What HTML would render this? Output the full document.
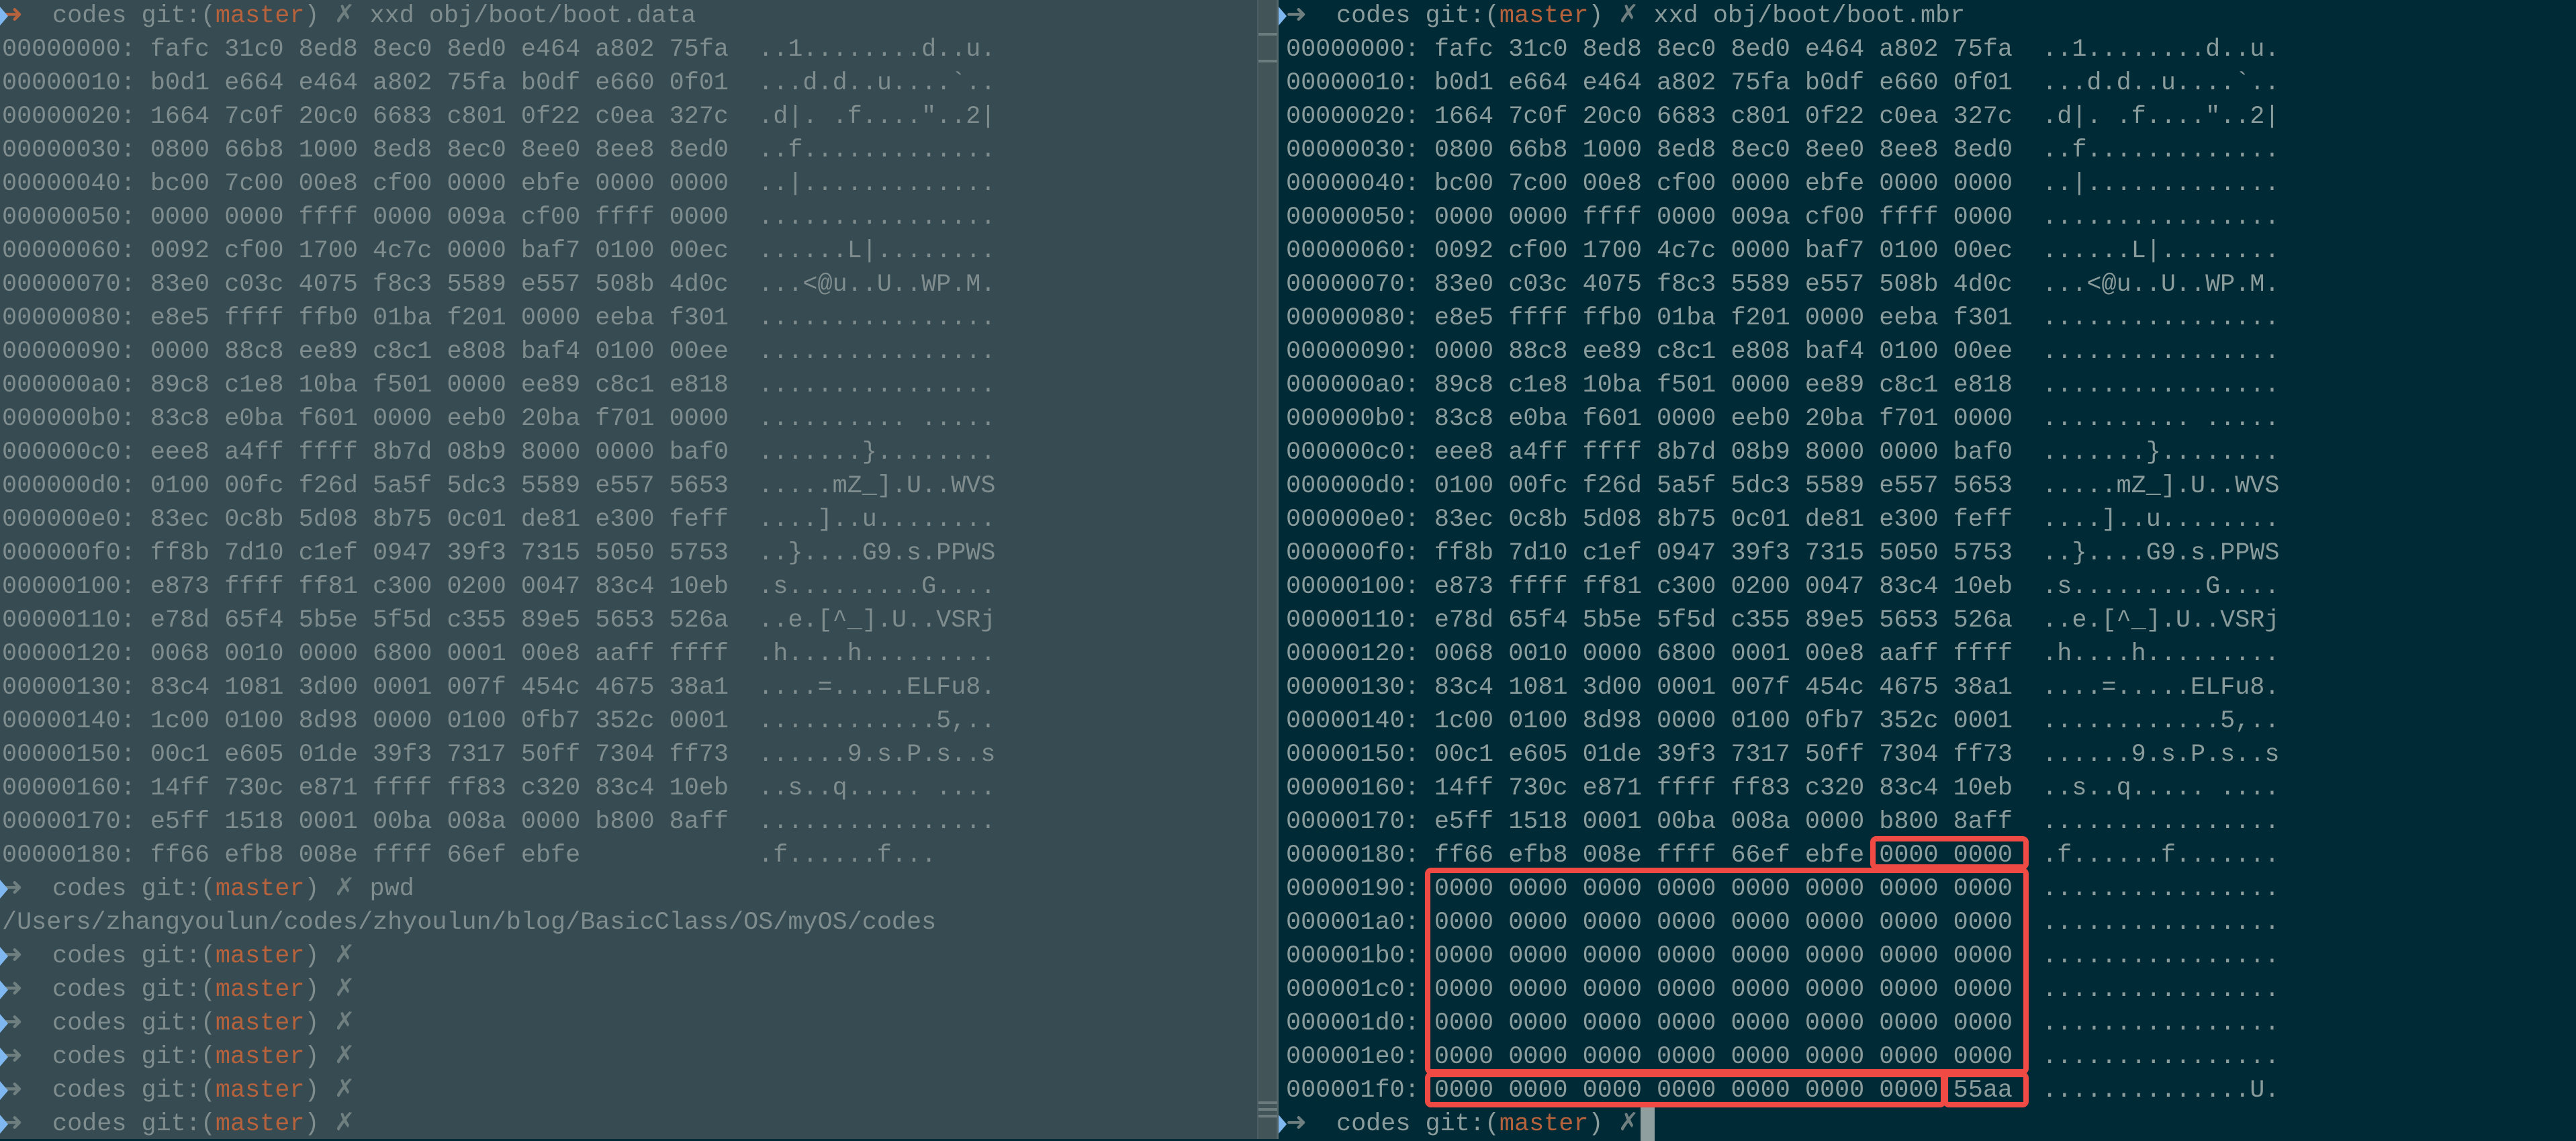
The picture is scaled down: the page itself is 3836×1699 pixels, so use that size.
<!DOCTYPE html>
<html><head><meta charset="utf-8"><style>
html,body{margin:0;padding:0;width:3836px;height:1696px;overflow:hidden;background:#002a36}
.l{position:absolute;left:0;top:0;width:1872px;height:1696px;background:#374b52}
.d{position:absolute;left:1872px;top:0;width:32px;height:1696px;background:#435459;border-left:2px solid #4c5e63;border-right:3px solid #56676b;box-sizing:border-box}
.d i{position:absolute;left:0;width:28px;height:4px;background:#6b7b7e}
.r{position:absolute;left:1904px;top:0;width:1932px;height:1696px;background:#002a36}
pre{position:absolute;margin:0;top:-1px;font-family:"Liberation Mono",monospace;font-size:36.8px;line-height:50px;white-space:pre}
.pl{left:3px;color:#7f8d8e}
.pr{left:1915px;color:#8b9c9c}
.m{color:#b5623d}
.a{color:#6f7f80}
.b{position:absolute;border:8px solid #f04a45;border-radius:9px;box-sizing:border-box}
.cur{position:absolute;left:2443px;top:1649px;width:21px;height:50px;background:#8f9fa0}
.mk{position:absolute;left:0;width:0;height:0;border-top:14px solid transparent;border-bottom:14px solid transparent;border-left:12px solid #7fb8f0}
</style></head><body>
<div class="l"></div>
<div class="d"><i style="top:49px"></i><i style="top:89px"></i><i style="top:1640px"></i><i style="top:1650px"></i><i style="top:1660px"></i></div>
<div class="r"></div>
<pre class="pl"><span class="m">➜</span>  codes git:(<span class="m">master</span>) <span class="a">✗</span> xxd obj/boot/boot.data
00000000: fafc 31c0 8ed8 8ec0 8ed0 e464 a802 75fa  ..1........d..u.
00000010: b0d1 e664 e464 a802 75fa b0df e660 0f01  ...d.d..u....`..
00000020: 1664 7c0f 20c0 6683 c801 0f22 c0ea 327c  .d|. .f...."..2|
00000030: 0800 66b8 1000 8ed8 8ec0 8ee0 8ee8 8ed0  ..f.............
00000040: bc00 7c00 00e8 cf00 0000 ebfe 0000 0000  ..|.............
00000050: 0000 0000 ffff 0000 009a cf00 ffff 0000  ................
00000060: 0092 cf00 1700 4c7c 0000 baf7 0100 00ec  ......L|........
00000070: 83e0 c03c 4075 f8c3 5589 e557 508b 4d0c  ...&lt;@u..U..WP.M.
00000080: e8e5 ffff ffb0 01ba f201 0000 eeba f301  ................
00000090: 0000 88c8 ee89 c8c1 e808 baf4 0100 00ee  ................
000000a0: 89c8 c1e8 10ba f501 0000 ee89 c8c1 e818  ................
000000b0: 83c8 e0ba f601 0000 eeb0 20ba f701 0000  .......... .....
000000c0: eee8 a4ff ffff 8b7d 08b9 8000 0000 baf0  .......}........
000000d0: 0100 00fc f26d 5a5f 5dc3 5589 e557 5653  .....mZ_].U..WVS
000000e0: 83ec 0c8b 5d08 8b75 0c01 de81 e300 feff  ....]..u........
000000f0: ff8b 7d10 c1ef 0947 39f3 7315 5050 5753  ..}....G9.s.PPWS
00000100: e873 ffff ff81 c300 0200 0047 83c4 10eb  .s.........G....
00000110: e78d 65f4 5b5e 5f5d c355 89e5 5653 526a  ..e.[^_].U..VSRj
00000120: 0068 0010 0000 6800 0001 00e8 aaff ffff  .h....h.........
00000130: 83c4 1081 3d00 0001 007f 454c 4675 38a1  ....=.....ELFu8.
00000140: 1c00 0100 8d98 0000 0100 0fb7 352c 0001  ............5,..
00000150: 00c1 e605 01de 39f3 7317 50ff 7304 ff73  ......9.s.P.s..s
00000160: 14ff 730c e871 ffff ff83 c320 83c4 10eb  ..s..q..... ....
00000170: e5ff 1518 0001 00ba 008a 0000 b800 8aff  ................
00000180: ff66 efb8 008e ffff 66ef ebfe            .f......f...
<span class="a">➜</span>  codes git:(<span class="m">master</span>) <span class="a">✗</span> pwd
/Users/zhangyoulun/codes/zhyoulun/blog/BasicClass/OS/myOS/codes
<span class="a">➜</span>  codes git:(<span class="m">master</span>) <span class="a">✗</span>
<span class="a">➜</span>  codes git:(<span class="m">master</span>) <span class="a">✗</span>
<span class="a">➜</span>  codes git:(<span class="m">master</span>) <span class="a">✗</span>
<span class="a">➜</span>  codes git:(<span class="m">master</span>) <span class="a">✗</span>
<span class="a">➜</span>  codes git:(<span class="m">master</span>) <span class="a">✗</span>
<span class="a">➜</span>  codes git:(<span class="m">master</span>) <span class="a">✗</span></pre>
<pre class="pr"><span class="a">➜</span>  codes git:(<span class="m">master</span>) <span class="a">✗</span> xxd obj/boot/boot.mbr
00000000: fafc 31c0 8ed8 8ec0 8ed0 e464 a802 75fa  ..1........d..u.
00000010: b0d1 e664 e464 a802 75fa b0df e660 0f01  ...d.d..u....`..
00000020: 1664 7c0f 20c0 6683 c801 0f22 c0ea 327c  .d|. .f...."..2|
00000030: 0800 66b8 1000 8ed8 8ec0 8ee0 8ee8 8ed0  ..f.............
00000040: bc00 7c00 00e8 cf00 0000 ebfe 0000 0000  ..|.............
00000050: 0000 0000 ffff 0000 009a cf00 ffff 0000  ................
00000060: 0092 cf00 1700 4c7c 0000 baf7 0100 00ec  ......L|........
00000070: 83e0 c03c 4075 f8c3 5589 e557 508b 4d0c  ...&lt;@u..U..WP.M.
00000080: e8e5 ffff ffb0 01ba f201 0000 eeba f301  ................
00000090: 0000 88c8 ee89 c8c1 e808 baf4 0100 00ee  ................
000000a0: 89c8 c1e8 10ba f501 0000 ee89 c8c1 e818  ................
000000b0: 83c8 e0ba f601 0000 eeb0 20ba f701 0000  .......... .....
000000c0: eee8 a4ff ffff 8b7d 08b9 8000 0000 baf0  .......}........
000000d0: 0100 00fc f26d 5a5f 5dc3 5589 e557 5653  .....mZ_].U..WVS
000000e0: 83ec 0c8b 5d08 8b75 0c01 de81 e300 feff  ....]..u........
000000f0: ff8b 7d10 c1ef 0947 39f3 7315 5050 5753  ..}....G9.s.PPWS
00000100: e873 ffff ff81 c300 0200 0047 83c4 10eb  .s.........G....
00000110: e78d 65f4 5b5e 5f5d c355 89e5 5653 526a  ..e.[^_].U..VSRj
00000120: 0068 0010 0000 6800 0001 00e8 aaff ffff  .h....h.........
00000130: 83c4 1081 3d00 0001 007f 454c 4675 38a1  ....=.....ELFu8.
00000140: 1c00 0100 8d98 0000 0100 0fb7 352c 0001  ............5,..
00000150: 00c1 e605 01de 39f3 7317 50ff 7304 ff73  ......9.s.P.s..s
00000160: 14ff 730c e871 ffff ff83 c320 83c4 10eb  ..s..q..... ....
00000170: e5ff 1518 0001 00ba 008a 0000 b800 8aff  ................
00000180: ff66 efb8 008e ffff 66ef ebfe 0000 0000  .f......f.......
00000190: 0000 0000 0000 0000 0000 0000 0000 0000  ................
000001a0: 0000 0000 0000 0000 0000 0000 0000 0000  ................
000001b0: 0000 0000 0000 0000 0000 0000 0000 0000  ................
000001c0: 0000 0000 0000 0000 0000 0000 0000 0000  ................
000001d0: 0000 0000 0000 0000 0000 0000 0000 0000  ................
000001e0: 0000 0000 0000 0000 0000 0000 0000 0000  ................
000001f0: 0000 0000 0000 0000 0000 0000 0000 55aa  ..............U.
<span class="a">➜</span>  codes git:(<span class="m">master</span>) <span class="a">✗</span></pre>
<div class="b" style="left:2785px;top:1245px;width:236px;height:50px"></div>
<div class="b" style="left:2122px;top:1292px;width:899px;height:308px"></div>
<div class="b" style="left:2122px;top:1596px;width:776px;height:53px"></div>
<div class="b" style="left:2893px;top:1596px;width:128px;height:53px"></div>
<div class="cur"></div>
<div class="mk" style="top:10px"></div>
<div class="mk" style="top:1310px"></div>
<div class="mk" style="top:1410px"></div>
<div class="mk" style="top:1460px"></div>
<div class="mk" style="top:1510px"></div>
<div class="mk" style="top:1560px"></div>
<div class="mk" style="top:1610px"></div>
<div class="mk" style="top:1660px"></div>
<div class="mk" style="left:1904px;top:10px"></div>
<div class="mk" style="left:1904px;top:1660px"></div>
</body></html>
